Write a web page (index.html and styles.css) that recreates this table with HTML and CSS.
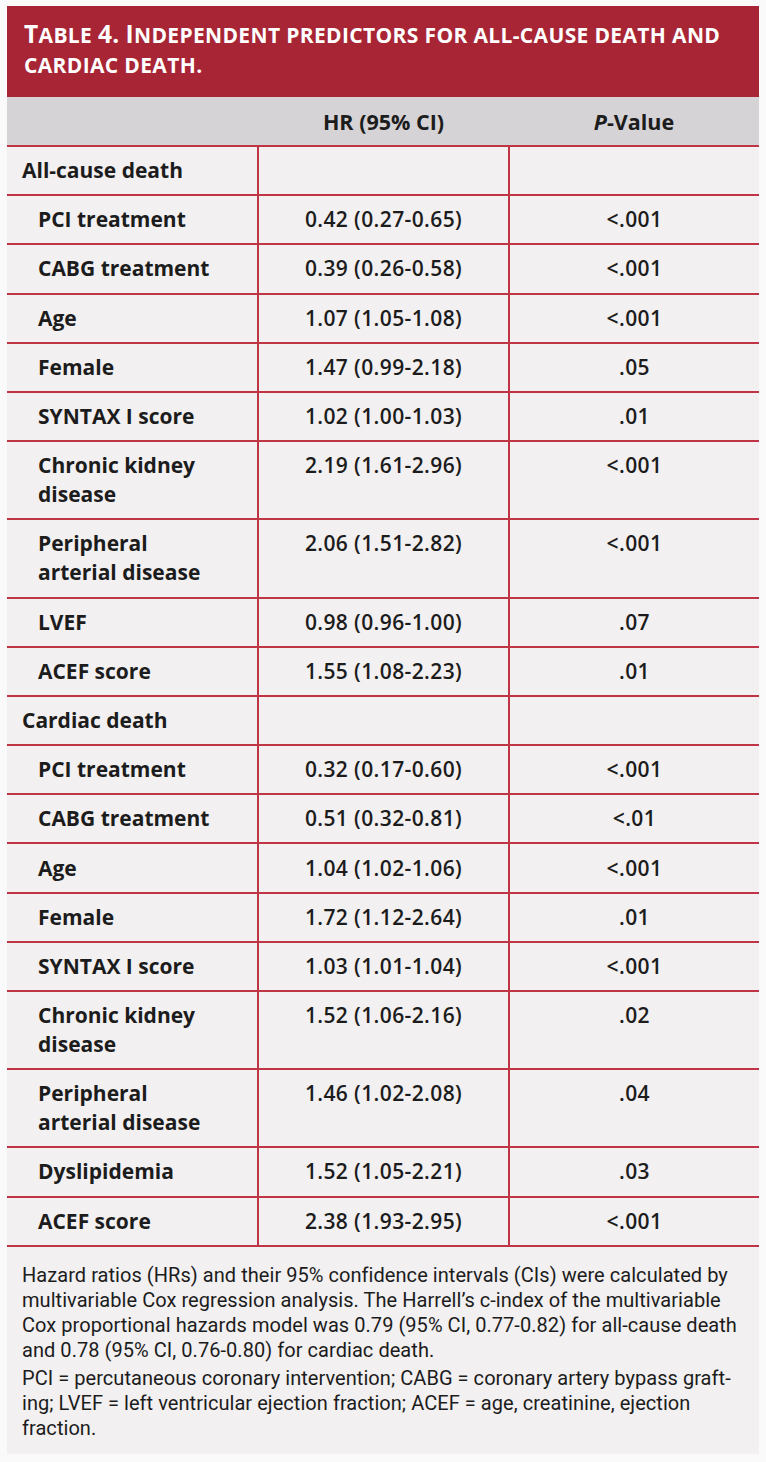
FILE: index.html
```html
<!DOCTYPE html>
<html lang="en">
<head>
<meta charset="utf-8">
<title>Table 4</title>
<link rel="stylesheet" href="styles.css">
</head>
<body>
<div class="card">
  <div class="title"><span class="big">T</span>able <span class="big">4.</span> <span class="big">I</span>ndependent predictors for all-cause death and<br>cardiac death.</div>
  <table class="tbl">
    <colgroup><col class="c1"><col class="c2"><col class="c3"></colgroup>
    <thead>
      <tr><th></th><th>HR (95% CI)</th><th><i>P</i>-Value</th></tr>
    </thead>
    <tbody>
      <tr><td class="grp">All-cause death</td><td></td><td></td></tr>
      <tr><td class="sub">PCI treatment</td><td>0.42 (0.27-0.65)</td><td>&lt;.001</td></tr>
      <tr><td class="sub">CABG treatment</td><td>0.39 (0.26-0.58)</td><td>&lt;.001</td></tr>
      <tr><td class="sub">Age</td><td>1.07 (1.05-1.08)</td><td>&lt;.001</td></tr>
      <tr><td class="sub">Female</td><td>1.47 (0.99-2.18)</td><td>.05</td></tr>
      <tr><td class="sub">SYNTAX I score</td><td>1.02 (1.00-1.03)</td><td>.01</td></tr>
      <tr><td class="sub">Chronic kidney<br>disease</td><td>2.19 (1.61-2.96)</td><td>&lt;.001</td></tr>
      <tr><td class="sub">Peripheral<br>arterial disease</td><td>2.06 (1.51-2.82)</td><td>&lt;.001</td></tr>
      <tr><td class="sub">LVEF</td><td>0.98 (0.96-1.00)</td><td>.07</td></tr>
      <tr><td class="sub">ACEF score</td><td>1.55 (1.08-2.23)</td><td>.01</td></tr>
      <tr><td class="grp">Cardiac death</td><td></td><td></td></tr>
      <tr><td class="sub">PCI treatment</td><td>0.32 (0.17-0.60)</td><td>&lt;.001</td></tr>
      <tr><td class="sub">CABG treatment</td><td>0.51 (0.32-0.81)</td><td>&lt;.01</td></tr>
      <tr><td class="sub">Age</td><td>1.04 (1.02-1.06)</td><td>&lt;.001</td></tr>
      <tr><td class="sub">Female</td><td>1.72 (1.12-2.64)</td><td>.01</td></tr>
      <tr><td class="sub">SYNTAX I score</td><td>1.03 (1.01-1.04)</td><td>&lt;.001</td></tr>
      <tr><td class="sub">Chronic kidney<br>disease</td><td>1.52 (1.06-2.16)</td><td>.02</td></tr>
      <tr><td class="sub">Peripheral<br>arterial disease</td><td>1.46 (1.02-2.08)</td><td>.04</td></tr>
      <tr><td class="sub">Dyslipidemia</td><td>1.52 (1.05-2.21)</td><td>.03</td></tr>
      <tr><td class="sub">ACEF score</td><td>2.38 (1.93-2.95)</td><td>&lt;.001</td></tr>
    </tbody>
  </table>
  <div class="note">
    <p>Hazard ratios (HRs) and their 95% confidence intervals (CIs) were calculated by<br>multivariable Cox regression analysis. The Harrell’s c-index of the multivariable<br>Cox proportional hazards model was 0.79 (95% CI, 0.77-0.82) for all-cause death<br>and 0.78 (95% CI, 0.76-0.80) for cardiac death.</p>
    <p>PCI = percutaneous coronary intervention; CABG = coronary artery bypass graft-<br>ing; LVEF = left ventricular ejection fraction; ACEF = age, creatinine, ejection<br>fraction.</p>
  </div>
</div>
</body>
</html>
```
FILE: styles.css
```css
html, body {
  margin: 0;
  padding: 0;
  background: #fafafa;
}
.card {
  width: 752px;
  margin: 6px 0 0 7px;
  background: #f2f0f1;
  font-family: "Open Sans", "Noto Sans", sans-serif;
  color: #1c1c1c;
}
.title {
  background: #a82535;
  color: #ffffff;
  font-family: "Open Sans", sans-serif;
  font-weight: 700;
  font-size: 21px;
  line-height: 30px;
  letter-spacing: 0.35px;
  text-transform: uppercase;
  white-space: nowrap;
  padding: 13px 0 18px 17px;
  height: 60px;
}
.title .big {
  font-size: 24.5px;
}
.tbl {
  width: 100%;
  border-collapse: collapse;
  table-layout: fixed;
}
.tbl .c1 { width: 251px; }
.tbl .c2 { width: 251px; }
.tbl .c3 { width: 250px; }
.tbl th {
  background: #d5d3d6;
  font-weight: 700;
  font-size: 21.5px;
  line-height: 29px;
  padding: 10px 0 9px;
  text-align: center;
  border-bottom: 2px solid #c03545;
}
.tbl td {
  font-size: 21px;
  font-weight: 600;
  letter-spacing: 0.4px;
  line-height: 29px;
  padding: 9.1px 0;
  text-align: center;
  border-bottom: 2px solid #c03545;
  border-right: 2px solid #c03545;
  vertical-align: top;
}
.tbl td:last-child {
  border-right: none;
}
.tbl td.grp,
.tbl td.sub {
  text-align: left;
  font-weight: 700;
  letter-spacing: 0;
}
.tbl td.grp {
  padding-left: 15px;
}
.tbl td.sub {
  padding-left: 31px;
}
.note {
  font-family: "Roboto", "Liberation Sans", sans-serif;
  font-size: 20px;
  letter-spacing: 0.05px;
  line-height: 25px;
  color: #1c1c1c;
  padding: 16px 15px 13px;
  white-space: nowrap;
}
.note p {
  margin: 0;
}
.note p + p {
  margin-top: 3px;
}
```
